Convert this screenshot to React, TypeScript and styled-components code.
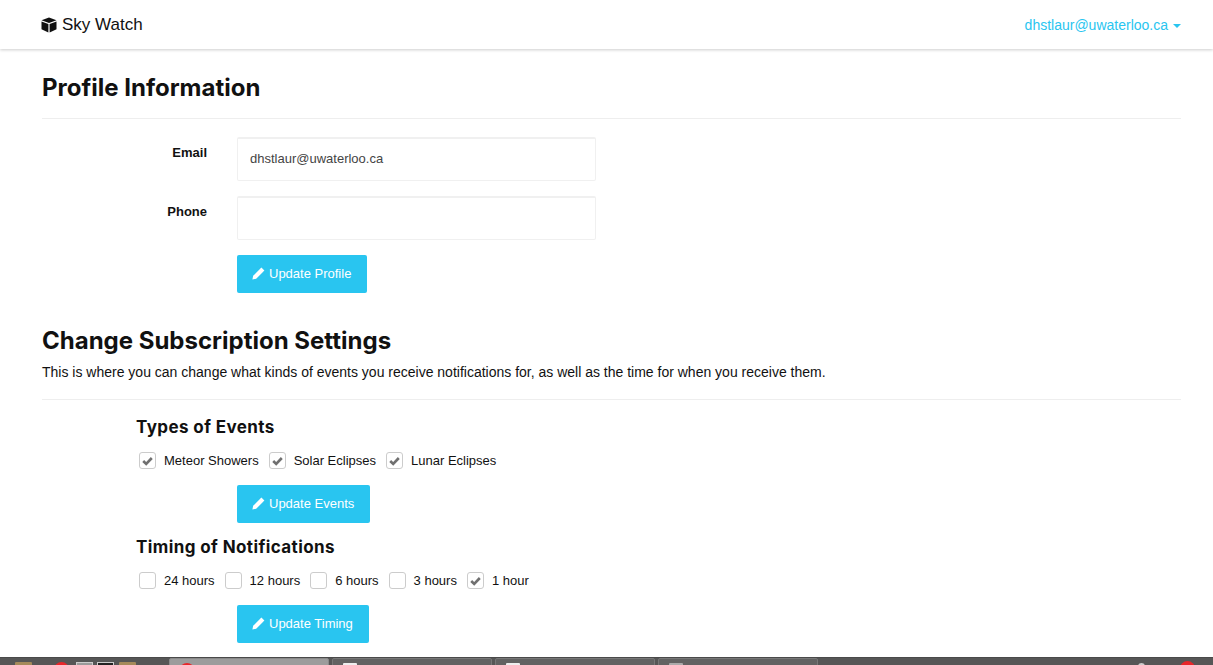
import styled, { createGlobalStyle } from "styled-components";

const GlobalStyle = createGlobalStyle`
  html, body {
    margin: 0;
    padding: 0;
    height: 665px;
    overflow: hidden;
    background: #fff;
    font-family: "Liberation Sans", Arial, sans-serif;
    font-size: 13px;
    color: #111;
  }
  * { box-sizing: border-box; }
`;

const Page = styled.div`
  height: 665px;
  display: flex;
  flex-direction: column;
`;

const Navbar = styled.nav`
  flex: none;
  height: 49px;
  padding: 0 32px 0 41px;
  display: flex;
  align-items: center;
  justify-content: space-between;
  background: #fff;
  box-shadow: 0 1px 3px rgba(0, 0, 0, 0.2);
`;

const Brand = styled.div`
  display: flex;
  align-items: center;
  gap: 5px;
  font-size: 17px;
  color: #111;
`;

const UserMenu = styled.div`
  display: flex;
  align-items: center;
  gap: 5px;
  font-size: 14px;
  color: #29c5f0;
`;

const Caret = styled.span`
  width: 0;
  height: 0;
  border-left: 4px solid transparent;
  border-right: 4px solid transparent;
  border-top: 4px solid #29c5f0;
  margin-top: 2px;
`;

const Content = styled.main`
  flex: 1;
  padding: 0 32px 0 42px;
`;

const Title = styled.h2`
  margin: 0;
  font-family: Inter, "Liberation Sans", sans-serif;
  font-size: 24px;
  line-height: 30px;
  font-weight: 700;
  color: #111;
`;

const ProfileHead = styled.div`
  margin-bottom: 18px;
  padding: 24px 0 15px;
  border-bottom: 1px solid #eee;
`;

const SubHead = styled.div`
  padding: 33px 0 17px;
  border-bottom: 1px solid #eee;
`;

const Intro = styled.p`
  margin: 6px 0 0;
  font-size: 14px;
  line-height: 20px;
`;

const FormRow = styled.div`
  display: grid;
  grid-template-columns: 165px 359px;
  column-gap: 30px;
  margin-bottom: 15px;
`;

const Label = styled.label`
  text-align: right;
  font-weight: 700;
  font-size: 13px;
  line-height: 15px;
  padding-top: 8px;
`;

const Input = styled.input`
  display: block;
  width: 100%;
  height: 44px;
  padding: 0 12px 2px;
  border: 1px solid #f0f0f0;
  border-top: 2px solid #f0f0f0;
  border-radius: 2px;
  font: 13px "Liberation Sans", Arial, sans-serif;
  color: #444;
  background: #fff;
  outline: none;
`;

const ButtonRow = styled.div<{ $top: number }>`
  margin: ${(p) => p.$top}px 0 0 195px;
`;

const Button = styled.button<{ $width: number }>`
  display: flex;
  align-items: center;
  gap: 4px;
  width: ${(p) => p.$width}px;
  height: 38px;
  padding: 0 0 2px 15px;
  border: 0;
  border-radius: 2px;
  background: #29c5f0;
  color: #fff;
  font: 13px "Liberation Sans", Arial, sans-serif;
`;

const Group = styled.section<{ $top: number }>`
  margin: ${(p) => p.$top}px 0 0 95px;
`;

const GroupTitle = styled.h3`
  margin: 0;
  margin-left: -1px;
  font-family: Inter, "Liberation Sans", sans-serif;
  font-size: 17px;
  line-height: 20px;
  letter-spacing: 0.4px;
  font-weight: 700;
  color: #111;
`;

const Checks = styled.div`
  display: flex;
  align-items: center;
  margin: 15px 0 0 2px;
  height: 17px;
`;

const CheckItem = styled.label`
  display: flex;
  align-items: center;
  font-size: 13px;
  margin-right: 10px;
`;

const Box = styled.span`
  width: 17px;
  height: 17px;
  margin-right: 8px;
  display: flex;
  align-items: center;
  justify-content: center;
  border: 1px solid #ccc;
  border-radius: 3px;
`;

const Taskbar = styled.footer`
  flex: none;
  height: 8px;
  padding-left: 15px;
  display: flex;
  align-items: flex-start;
  overflow: hidden;
  background: #565656;
  border-top: 1px solid #4a4a4a;
`;

const Tray = styled.div`
  display: flex;
  width: 154px;
  flex: none;
  padding-top: 4px;
`;

const Folder = styled.span<{ $left: number }>`
  width: 17px;
  height: 10px;
  margin-left: ${(p) => p.$left}px;
  background: #a58a5a;
  border-radius: 1px;
`;

const Ball = styled.span<{ $left: number }>`
  width: 15px;
  height: 15px;
  margin-left: ${(p) => p.$left}px;
  border-radius: 50%;
  background: #e8262a;
`;

const Launcher = styled.span<{ $left: number; $dark?: boolean }>`
  width: 17px;
  height: 12px;
  margin-left: ${(p) => p.$left}px;
  border: 1px solid #ccc;
  background: ${(p) => (p.$dark ? "#222" : "#9a9a9a")};
`;

const Task = styled.div<{ $active?: boolean }>`
  flex: none;
  width: 160px;
  height: 10px;
  margin-right: 3px;
  padding: 4px 0 0 10px;
  border: 1px solid ${(p) => (p.$active ? "#8a8a8a" : "#777")};
  border-radius: 2px 2px 0 0;
  background: ${(p) => (p.$active ? "#9c9c9c" : "#626262")};
`;

const TaskIcon = styled.span<{ $color: string; $round?: boolean }>`
  display: block;
  width: 14px;
  height: 12px;
  border-radius: ${(p) => (p.$round ? "50%" : "1px")};
  background: ${(p) => p.$color};
`;

const TrayRight = styled.div`
  margin-left: auto;
  padding: 3px 18px 0 0;
  display: flex;
`;

const Dot = styled.span`
  width: 7px;
  height: 7px;
  margin: 2px 35px 0 0;
  border-radius: 50%;
  background: #ccc;
`;

const CubeIcon = () => (
  <svg width="16" height="16" viewBox="0 0 16 16">
    <path d="M8 0.5 15.5 3.2 8 6 0.5 3.2Z" fill="#111" />
    <path d="M0.5 4.4 7.4 7V15.5L0.5 12.2Z" fill="#111" />
    <path d="M15.5 4.4 8.6 7V15.5L15.5 12.2Z" fill="#111" />
  </svg>
);

const PencilIcon = () => (
  <svg width="13" height="13" viewBox="0 0 13 13">
    <path d="M9.4 0.6 12.4 3.6 4.2 11.8 0.4 12.6 1.2 8.8Z" fill="#fff" />
  </svg>
);

const CheckIcon = () => (
  <svg width="11" height="10" viewBox="0 0 11 10">
    <path d="M1.2 5 4.2 8 9.8 2" fill="none" stroke="#707070" strokeWidth="2.6" />
  </svg>
);

const Check = ({ label, on }: { label: string; on?: boolean }) => (
  <CheckItem>
    <Box>{on && <CheckIcon />}</Box>
    {label}
  </CheckItem>
);

export default function App() {
  return (
    <>
      <GlobalStyle />
      <Page>
        <Navbar>
          <Brand>
            <CubeIcon />
            Sky Watch
          </Brand>
          <UserMenu>
            dhstlaur@uwaterloo.ca
            <Caret />
          </UserMenu>
        </Navbar>
        <Content>
          <ProfileHead>
            <Title>Profile Information</Title>
          </ProfileHead>
          <FormRow>
            <Label>Email</Label>
            <Input defaultValue="dhstlaur@uwaterloo.ca" />
          </FormRow>
          <FormRow>
            <Label>Phone</Label>
            <Input />
          </FormRow>
          <ButtonRow $top={0}>
            <Button $width={130}>
              <PencilIcon />
              Update Profile
            </Button>
          </ButtonRow>
          <SubHead>
            <Title>Change Subscription Settings</Title>
            <Intro>
              This is where you can change what kinds of events you receive notifications for, as well as the time for
              when you receive them.
            </Intro>
          </SubHead>
          <Group $top={17}>
            <GroupTitle>Types of Events</GroupTitle>
            <Checks>
              <Check label="Meteor Showers" on />
              <Check label="Solar Eclipses" on />
              <Check label="Lunar Eclipses" on />
            </Checks>
          </Group>
          <ButtonRow $top={16}>
            <Button $width={133}>
              <PencilIcon />
              Update Events
            </Button>
          </ButtonRow>
          <Group $top={14}>
            <GroupTitle>Timing of Notifications</GroupTitle>
            <Checks>
              <Check label="24 hours" />
              <Check label="12 hours" />
              <Check label="6 hours" />
              <Check label="3 hours" />
              <Check label="1 hour" on />
            </Checks>
          </Group>
          <ButtonRow $top={16}>
            <Button $width={132}>
              <PencilIcon />
              Update Timing
            </Button>
          </ButtonRow>
        </Content>
        <Taskbar>
          <Tray>
            <Folder $left={0} />
            <Ball $left={22} />
            <Launcher $left={7} />
            <Launcher $left={4} $dark />
            <Folder $left={5} />
          </Tray>
          <Task $active>
            <TaskIcon $color="#e8262a" $round />
          </Task>
          <Task>
            <TaskIcon $color="#eee" />
          </Task>
          <Task>
            <TaskIcon $color="#eee" />
          </Task>
          <Task>
            <TaskIcon $color="#aaa" />
          </Task>
          <TrayRight>
            <Dot />
            <Ball $left={0} />
          </TrayRight>
        </Taskbar>
      </Page>
    </>
  );
}
